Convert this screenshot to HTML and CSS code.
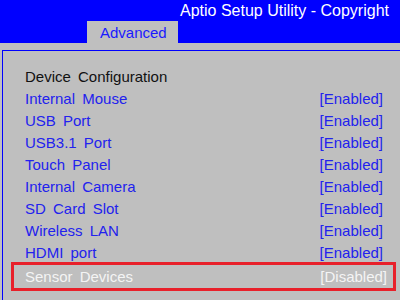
FILE: index.html
```html
<!DOCTYPE html>
<html lang="en">
<head>
    <meta charset="UTF-8">
    <title>Aptio Setup Utility</title>
    <link rel="stylesheet" href="styles.css">
</head>
<body>
    <div class="header">
        <div class="title">Aptio Setup Utility - Copyright</div>
        <div class="tabs">
            <span class="tab">Advanced</span>
        </div>
    </div>

    <div class="panel">
        <div class="heading">Device Configuration</div>
        <div class="row"><span>Internal Mouse</span><span>[Enabled]</span></div>
        <div class="row"><span>USB Port</span><span>[Enabled]</span></div>
        <div class="row"><span>USB3.1 Port</span><span>[Enabled]</span></div>
        <div class="row"><span>Touch Panel</span><span>[Enabled]</span></div>
        <div class="row"><span>Internal Camera</span><span>[Enabled]</span></div>
        <div class="row"><span>SD Card Slot</span><span>[Enabled]</span></div>
        <div class="row"><span>Wireless LAN</span><span>[Enabled]</span></div>
        <div class="row"><span>HDMI port</span><span>[Enabled]</span></div>
        <div class="row selected"><span>Sensor Devices</span><span>[Disabled]</span></div>
    </div>
</body>
</html>
```

FILE: styles.css
```css
/* Reset */
* {
    margin: 0;
    padding: 0;
    box-sizing: border-box;
}

body {
    width: 400px;
    height: 300px;
    overflow: hidden;
    background-color: #bfbfbf;
    font-family: "Liberation Sans", Arial, sans-serif;
    font-size: 15px;
}

/* Top blue band */
.header {
    background-color: #0000ff;
    height: 43px;
    display: flex;
    flex-direction: column;
}

.title {
    color: #fff;
    font-size: 16px;
    text-align: right;
    padding-right: 11px;
    height: 21px;
    line-height: 22px;
}

.tabs {
    padding-left: 87px;
}

.tab {
    display: inline-block;
    background-color: #bfbfbf;
    color: #1a1aff;
    width: 91px;
    height: 22px;
    line-height: 23px;
    padding-left: 13px;
}

/* Main panel */
.panel {
    margin: 7px 0 0 2px;
    border-top: 1px solid #0000ff;
    border-left: 1px solid #0000ff;
    height: 260px;
    padding: 15px 4px 0 8px;
}

.heading {
    color: #111;
    height: 22px;
    line-height: 22px;
    padding-left: 14px;
    word-spacing: 3px;
}

.row {
    display: flex;
    justify-content: space-between;
    color: #2222ee;
    height: 22px;
    line-height: 22px;
    padding: 0 13px 0 14px;
    word-spacing: 3px;
}

.row.selected {
    color: #f4f4f4;
    border: 3px solid #e8202a;
    height: 29px;
    line-height: 23px;
    margin-top: -2px;
    padding: 0 6px 0 11px;
}
```
